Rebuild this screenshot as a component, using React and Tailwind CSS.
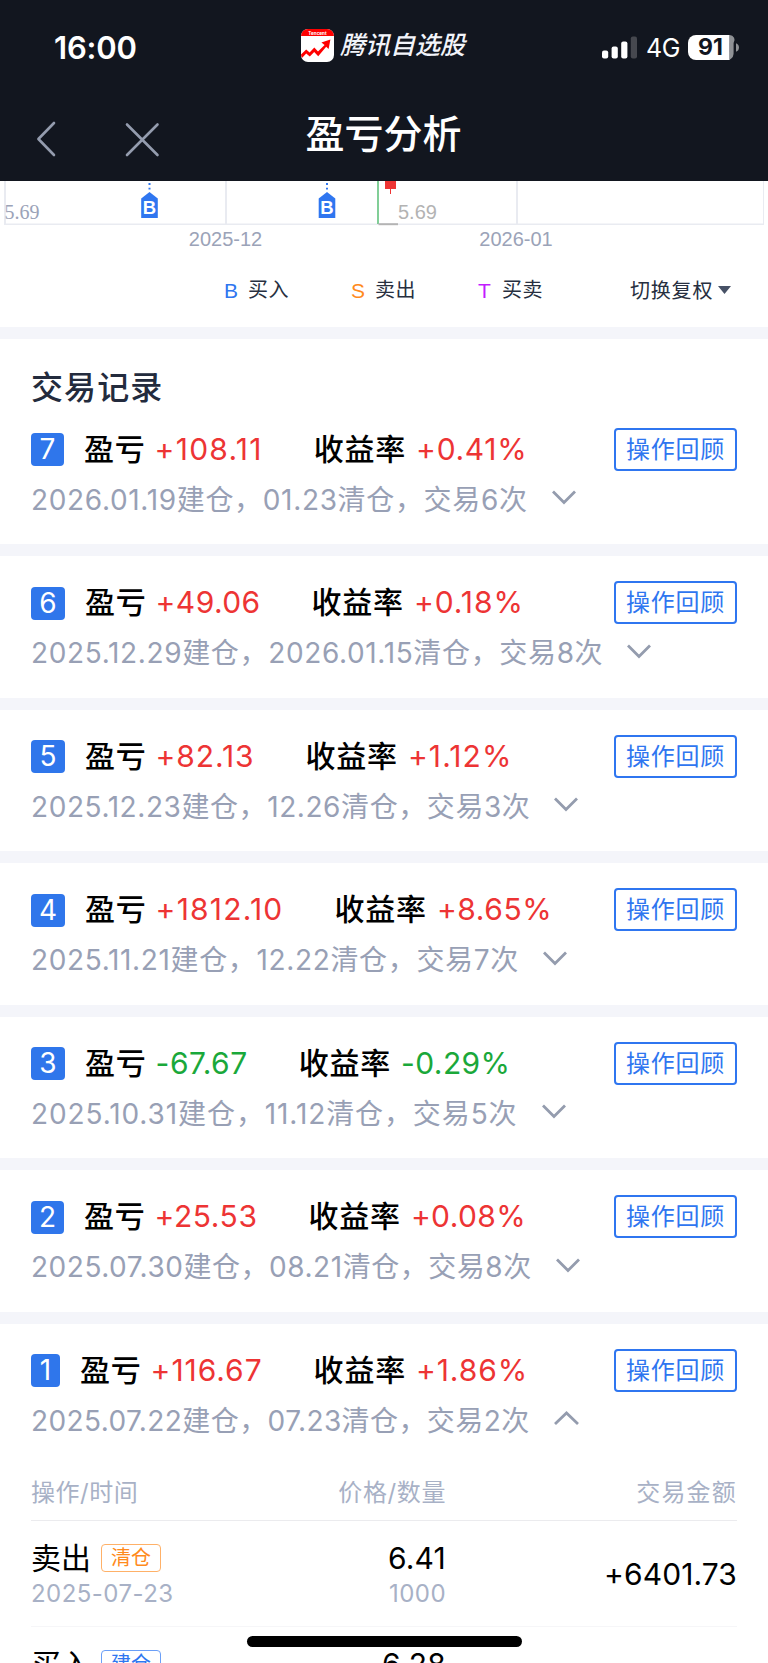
import React, { useState } from 'react';

const FONT = "font-['Inter','Noto_Sans_CJK_SC',sans-serif]";

/**
 * 交易记录数据
 * fit: 序号宽度及各段数字的字距
 */
const RECORDS = [
    {
        id: 7, profit: '+108.11', rate: '+0.41%', open: '2026.01.19', close: '01.23', count: 6,
        fit: { badge: 'w-[33px]', profit: 'tracking-[1.25px]', rate: 'tracking-[0.7px]', desc: 'tracking-[0.67px]' },
    },
    {
        id: 6, profit: '+49.06', rate: '+0.18%', open: '2025.12.29', close: '2026.01.15', count: 8,
        fit: { badge: 'w-[34px]', profit: 'tracking-[0.4px]', rate: 'tracking-[0.95px]', desc: 'tracking-[0.65px]' },
    },
    {
        id: 5, profit: '+82.13', rate: '+1.12%', open: '2025.12.23', close: '12.26', count: 3,
        fit: { badge: 'w-[34px]', profit: 'tracking-[0.9px]', rate: 'tracking-[1.1px]', desc: 'tracking-[0.58px]' },
    },
    {
        id: 4, profit: '+1812.10', rate: '+8.65%', open: '2025.11.21', close: '12.22', count: 7,
        fit: { badge: 'w-[34px]', profit: 'tracking-[1.2px]', rate: 'tracking-[0.6px]', desc: 'tracking-[0.65px]' },
    },
    {
        id: 3, profit: '-67.67', rate: '-0.29%', open: '2025.10.31', close: '11.12', count: 5,
        fit: { badge: 'w-[34px]', profit: 'tracking-[0.5px]', rate: 'tracking-[0.4px]', desc: 'tracking-[0.9px]' },
    },
    {
        id: 2, profit: '+25.53', rate: '+0.08%', open: '2025.07.30', close: '08.21', count: 8,
        fit: { badge: 'w-[33px]', profit: 'tracking-[0.55px]', rate: 'tracking-[0.4px]', desc: 'tracking-[0.53px]' },
    },
    {
        id: 1, profit: '+116.67', rate: '+1.86%', open: '2025.07.22', close: '07.23', count: 2,
        fit: { badge: 'w-[29px]', profit: 'tracking-[0.95px]', rate: 'tracking-[0.9px]', desc: 'tracking-[0.42px]' },
        trades: [
            { type: '卖出', tag: '清仓', date: '2025-07-23', price: '6.41', amount: '1000', total: '+6401.73' },
            { type: '买入', tag: '建仓', price: '6.28' },
        ],
    },
];

const LEGENDS = [
    { mark: 'B', label: '买入', color: 'text-[#2f76f0]' },
    { mark: 'S', label: '卖出', color: 'text-[#ff8a1c]' },
    { mark: 'T', label: '买卖', color: 'text-[#c31cff]' },
];

const AppLogo = () => (
    <svg width="33" height="33" viewBox="0 0 33 33" className="shrink-0">
        <rect width="33" height="33" rx="7" fill="#fff" />
        <path d="M0 7a7 7 0 0 1 7-7h19a7 7 0 0 1 7 7z" fill="#fe0000" />
        <text x="16.5" y="5.6" fontSize="4.6" fontWeight="700" fill="#fff" textAnchor="middle" fontFamily="Inter">Tencent</text>
        <path d="M0 25.6 5.2 20.4 8.6 23.6 13.3 18.6 17 22.4 23.6 16 20.4 13.4 29.4 10.6 27.6 20 25.2 17.8 17.2 27.2 13.2 23 8.8 27.6 5.2 24.4 1.2 28.8Q0 27.6 0 25.6z" fill="#fe0000" />
    </svg>
);

const StatusBar = () => (
    <div className="h-[94px] pt-px flex items-center justify-between pl-[54px] pr-[29px] text-white">
        <div className="w-[247px] text-[31px] leading-none font-semibold tracking-[-0.2px]">16:00</div>
        <div className="flex-1 flex items-center gap-[6px] -mt-[4px]">
            <AppLogo />
            <span className="text-[25px] leading-none italic font-medium text-[#f2f4fa]">腾讯自选股</span>
        </div>
        <div className="flex items-center">
            <svg width="36" height="23" viewBox="0 0 36 23">
                <rect x="0" y="14.5" width="6.2" height="8" rx="2" fill="#fff" />
                <rect x="9.6" y="10.5" width="6.2" height="12" rx="2" fill="#fff" />
                <rect x="19.2" y="5.5" width="6.2" height="17" rx="2" fill="#fff" />
                <rect x="28.8" y="0.5" width="6.2" height="22" rx="2" fill="#46484f" />
            </svg>
            <span className="ml-[8px] w-[42px] text-[25px] leading-[30px] tracking-[-0.5px]">4G</span>
            <svg width="51" height="25" viewBox="0 0 51 25">
                <path d="M8 0H41.6V25H8a8 8 0 0 1-8-8V8a8 8 0 0 1 8-8z" fill="#fff" />
                <path d="M41.6 0a5 5 0 0 1 4 8v9a8 8 0 0 1-4 7.8z" fill="#8f9195" />
                <path d="M48 8.2a4.6 4.6 0 0 1 0 8.6z" fill="#8f9195" />
                <text x="22.5" y="20.4" fontSize="23" fontWeight="700" fill="#12161f" textAnchor="middle" fontFamily="Inter">91</text>
            </svg>
        </div>
    </div>
);

const NavBar = () => (
    <div className="h-[87px] relative flex items-start">
        <svg width="160" height="40" viewBox="0 0 160 40" className="mt-[25px] ml-[30px]" fill="none" stroke="#949cae" strokeWidth="2.6" strokeLinecap="round" strokeLinejoin="round">
            <path d="M24 4 8.4 20 24 36" />
            <path d="M97 5.5 127.5 36M127.5 5.5 97 36" />
        </svg>
        <h1 className="absolute inset-x-0 top-[20px] pr-px text-center text-[39px] leading-[40px] font-medium text-white">盈亏分析</h1>
    </div>
);

const BuyMark = ({ x }) => (
    <g>
        <path d={`M${x} 2v6.6`} stroke="#2f76f0" strokeWidth="2" strokeDasharray="2 2.8" />
        <path d={`M${x} 11l8.3 6.5v19.5h-16.6v-19.5z`} fill="#2f76f0" />
        <text x={x} y="32.6" fontSize="18.5" fontWeight="700" fill="#fff" textAnchor="middle" fontFamily="Liberation Sans">B</text>
    </g>
);

// K线图底部
const ChartTail = () => (
    <svg width="768" height="72" viewBox="0 0 768 72" className="block">
        <g fill="none" stroke="#e9ebf1">
            <path d="M5 0V43M226 0V43M517 0V43" strokeWidth="2" />
            <path d="M763.5 0V43" />
            <path d="M4 43.3H764" strokeWidth="1.6" />
        </g>
        <path d="M378 0V43" stroke="#4cba6c" strokeWidth="1.4" />
        <path d="M378.5 43.2H398" stroke="#b4b4b4" strokeWidth="2" />
        <path d="M385 0H396V8H391V13H390V8H385z" fill="#ee3434" />
        <BuyMark x={149.5} />
        <BuyMark x={327} />
        <g fontSize="20" fill="#9ba3b8">
            <text x="4.5" y="38.4" fontFamily="Liberation Serif">5.69</text>
            <text x="398" y="38.4" fill="#b3b3b3" fontFamily="Liberation Sans">5.69</text>
            <text x="225.5" y="65" textAnchor="middle" fontFamily="Liberation Sans">2025-12</text>
            <text x="516" y="65" textAnchor="middle" fontFamily="Liberation Sans">2026-01</text>
        </g>
    </svg>
);

const Legend = () => (
    <div className="h-[74px] flex items-center pl-[224px] text-[20px] leading-none text-[#272f40]">
        {LEGENDS.map((item) => (
            <div key={item.mark} className="w-[127px] flex items-center">
                <span className={`w-[24px] font-['Liberation_Sans'] text-[21px] ${item.color}`}>{item.mark}</span>
                <span className="tracking-[0.6px]">{item.label}</span>
            </div>
        ))}
        <button className="ml-[25px] mt-[2px] flex items-center gap-[5px] tracking-[0.8px]">
            切换复权
            <svg width="13" height="8" viewBox="0 0 13 8" className="-mt-[2px]"><path d="M0 0H13L6.5 8z" fill="#475166" /></svg>
        </button>
    </div>
);

const Chevron = ({ open }) => (
    <svg width="26" height="16" viewBox="0 0 26 16" className="ml-[23px] -mt-[4px]" fill="none" stroke="#949cae" strokeWidth="2.8">
        <path d={open ? 'M2 14 13.5 3 25 14' : 'M2 2.5 13 13.5 24 2.5'} />
    </svg>
);

const TradeTable = ({ trades }) => (
    <div>
        <div className="mt-[30px] h-[50px] flex text-[24px] leading-[44px] text-[#a8b1c6] border-b border-[#ebebee]">
            <span className="w-[214px] tracking-[0.5px]">操作/时间</span>
            <span className="w-[201px] text-right tracking-[0.6px]">价格/数量</span>
            <span className="flex-1 text-right tracking-[1.2px]">交易金额</span>
        </div>
        {trades.map((t) => (
            <div key={t.type} className="h-[106px] flex border-b border-[#f6f6f8]">
                <div className="w-[214px] pt-[17px]">
                    <div className="h-[40px] flex items-center gap-[10px]">
                        <span className="text-[30px] leading-[40px]">{t.type}</span>
                        <span className={`w-[60px] h-[28px] border rounded-[4px] text-center text-[20px] leading-[26px] ${t.tag === '清仓' ? 'text-[#ff8a1c] border-[#ffb168]' : 'text-[#2f76f0] border-[#6b9ff7]'}`}>{t.tag}</span>
                    </div>
                    <div className="text-[24px] leading-[32px] tracking-[0.45px] text-[#a8b1c6]">{t.date}</div>
                </div>
                <div className="w-[201px] pt-[17px] text-right">
                    <div className="text-[30px] leading-[40px] tracking-[0.2px]">{t.price}</div>
                    <div className="text-[24px] leading-[32px] tracking-[0.45px] text-[#a8b1c6]">{t.amount}</div>
                </div>
                <div className="flex-1 text-right text-[30px] leading-[106px] tracking-[0.1px]">{t.total}</div>
            </div>
        ))}
    </div>
);

const RecordCard = ({ record, title }) => {
    const [expanded, setExpanded] = useState(!!record.trades);
    const { fit } = record;
    const color = record.profit.startsWith('-') ? 'text-[#1aa83a]' : 'text-[#ed3434]';

    return (
        <section className={`bg-white px-[31px] ${expanded ? 'h-[420px]' : title ? 'h-[205px]' : 'h-[141.6px]'}`}>
            {title && <h2 className="pt-[26px] h-[63.5px] text-[32px] leading-[46px] font-medium tracking-[1.1px] text-[#232b3d]">{title}</h2>}
            <div className="pt-[25px] flex items-center">
                <span className={`h-[33px] mt-px rounded-[4px] bg-[#2f76eb] text-white text-center text-[28px] leading-[33px] ${fit.badge}`}>{record.id}</span>
                <span className="ml-[20px] text-[30px] leading-[43px] font-medium tracking-[0.8px]">盈亏</span>
                <span className={`ml-[9px] text-[30px] leading-[43px] ${fit.profit} ${color}`}>{record.profit}</span>
                <span className="ml-[51px] text-[30px] leading-[43px] font-medium tracking-[0.8px]">收益率</span>
                <span className={`ml-[10px] text-[30px] leading-[43px] ${fit.rate} ${color}`}>{record.rate}</span>
                <button className="ml-auto w-[123px] h-[43px] border-2 border-[#2f76f0] rounded-[4px] text-[24px] leading-[39px] tracking-[0.8px] text-[#2f76f0]">操作回顾</button>
            </div>
            <div className="mt-[8px] h-[41px] flex items-center cursor-pointer" onClick={() => setExpanded(!expanded)}>
                <span className={`mt-[2px] text-[28px] leading-[41px] text-[#98a0b5] ${fit.desc}`}>
                    {record.open}建仓，{record.close}清仓，交易{record.count}次
                </span>
                <Chevron open={expanded} />
            </div>
            {expanded && record.trades && <TradeTable trades={record.trades} />}
        </section>
    );
};

const App = () => (
    <div className={`relative w-[768px] h-[1663px] overflow-hidden bg-[#f4f5fa] text-black ${FONT}`}>
        <header className="h-[181px] bg-[#12161f]">
            <StatusBar />
            <NavBar />
        </header>
        <div className="h-[146px] bg-white">
            <ChartTail />
            <Legend />
        </div>
        <main className="pt-[12px] flex flex-col gap-[12px]">
            {RECORDS.map((record, idx) => (
                <RecordCard key={record.id} record={record} title={idx === 0 ? '交易记录' : ''} />
            ))}
        </main>
        <div className="absolute left-[247px] top-[1636px] w-[275px] h-[10.5px] rounded-full bg-black" />
    </div>
);

export default App;
